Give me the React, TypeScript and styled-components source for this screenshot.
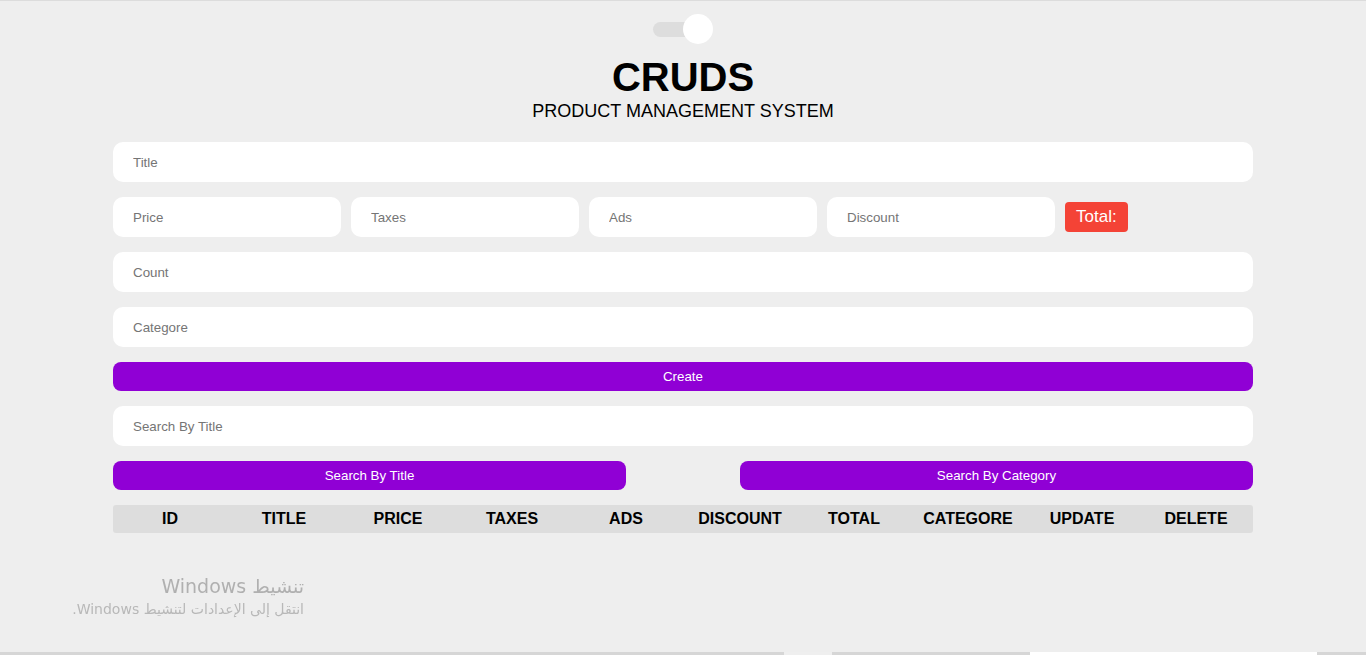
import React from "react";
import styled, { createGlobalStyle } from "styled-components";

const Global = createGlobalStyle`
  html, body {
    margin: 0;
    padding: 0;
    background: #eeeeee;
    font-family: "Liberation Sans", Arial, sans-serif;
  }
  body {
    border-top: 1px solid #dcdcdc;
    min-height: 654px;
    box-sizing: border-box;
  }
`;

const Page = styled.div`
  width: 1140px;
  margin: 0 auto;
  padding-top: 13px;
  display: flex;
  flex-direction: column;
`;

const Header = styled.header`
  display: flex;
  flex-direction: column;
  align-items: center;
`;

const Toggle = styled.div`
  position: relative;
  width: 60px;
  height: 30px;
  display: flex;
  align-items: center;
`;

const Track = styled.div`
  width: 50px;
  height: 15px;
  border-radius: 8px;
  background: #dddddd;
`;

const Knob = styled.div`
  position: absolute;
  right: 0;
  top: 0;
  width: 30px;
  height: 30px;
  border-radius: 50%;
  background: #ffffff;
`;

const Title = styled.h1`
  margin: 10px 0 0;
  font-size: 40px;
  line-height: 46px;
  font-weight: 700;
  color: #000;
`;

const Subtitle = styled.p`
  margin: 1px 0 0;
  font-size: 18px;
  line-height: 21px;
  color: #000;
`;

const Form = styled.div`
  margin-top: 20px;
  display: flex;
  flex-direction: column;
  gap: 15px;
`;

const Input = styled.input<{ $w?: string }>`
  box-sizing: border-box;
  width: ${(p) => p.$w ?? "100%"};
  height: 40px;
  border: none;
  outline: none;
  border-radius: 10px;
  background: #ffffff;
  padding: 0 20px;
  font-family: "Liberation Sans", Arial, sans-serif;
  font-size: 13.333px;
  color: #000;
  &::placeholder {
    color: #757575;
  }
`;

const PriceRow = styled.div`
  display: flex;
  align-items: center;
  gap: 10px;
`;

const TotalBadge = styled.small`
  display: inline-block;
  background: #f44336;
  color: #ffffff;
  border-radius: 4px;
  font-size: 17px;
  line-height: 30px;
  padding: 0 11px;
`;

const Button = styled.button<{ $w?: string }>`
  box-sizing: border-box;
  width: ${(p) => p.$w ?? "100%"};
  height: 29px;
  border: none;
  border-radius: 8px;
  background: #9000d5;
  color: #ffffff;
  font-family: "Liberation Sans", Arial, sans-serif;
  font-size: 13.333px;
  cursor: pointer;
`;

const SearchButtons = styled.div`
  display: flex;
  justify-content: space-between;
`;

const TableHead = styled.div`
  display: grid;
  grid-template-columns: repeat(10, 1fr);
  height: 28px;
  align-items: center;
  background: #dddddd;
  border-radius: 3px;
`;

const Th = styled.div`
  text-align: center;
  font-weight: 700;
  font-size: 16px;
  color: #000;
`;

const Watermark = styled.div`
  position: fixed;
  left: 0;
  width: 304px;
  top: 573px;
  direction: rtl;
  text-align: right;
  font-family: "DejaVu Sans", "Noto Sans", sans-serif;
`;

const WmTitle = styled.div`
  font-size: 19px;
  line-height: 26px;
  color: #b0b0b0;
`;

const WmSub = styled.div`
  font-size: 14px;
  line-height: 20px;
  color: #b8b8b8;
`;

const Taskbar = styled.div`
  position: fixed;
  left: 0;
  right: 0;
  bottom: 0;
  height: 3px;
  background: #d6d6d6;
`;

const TaskSeg = styled.div<{ $l: number; $w: number; $c: string }>`
  position: absolute;
  top: 0;
  bottom: 0;
  left: ${(p) => p.$l}px;
  width: ${(p) => p.$w}px;
  background: ${(p) => p.$c};
`;

const cols = ["ID", "TITLE", "PRICE", "TAXES", "ADS", "DISCOUNT", "TOTAL", "CATEGORE", "UPDATE", "DELETE"];

export default function App() {
  return (
    <>
      <Global />
      <Page>
        <Header>
          <Toggle>
            <Track />
            <Knob />
          </Toggle>
          <Title>CRUDS</Title>
          <Subtitle>PRODUCT MANAGEMENT SYSTEM</Subtitle>
        </Header>
        <Form>
          <Input placeholder="Title" />
          <PriceRow>
            <Input $w="228px" placeholder="Price" />
            <Input $w="228px" placeholder="Taxes" />
            <Input $w="228px" placeholder="Ads" />
            <Input $w="228px" placeholder="Discount" />
            <TotalBadge>Total:</TotalBadge>
          </PriceRow>
          <Input placeholder="Count" />
          <Input placeholder="Categore" />
          <Button>Create</Button>
          <Input placeholder="Search By Title" />
          <SearchButtons>
            <Button $w="513px">Search By Title</Button>
            <Button $w="513px">Search By Category</Button>
          </SearchButtons>
          <TableHead>
            {cols.map((c) => (
              <Th key={c}>{c}</Th>
            ))}
          </TableHead>
        </Form>
      </Page>
      <Watermark>
        <WmTitle>تنشيط Windows</WmTitle>
        <WmSub>انتقل إلى الإعدادات لتنشيط Windows.</WmSub>
      </Watermark>
      <Taskbar>
        <TaskSeg $l={784} $w={48} $c="#efefef" />
        <TaskSeg $l={1030} $w={287} $c="#ffffff" />
      </Taskbar>
    </>
  );
}
